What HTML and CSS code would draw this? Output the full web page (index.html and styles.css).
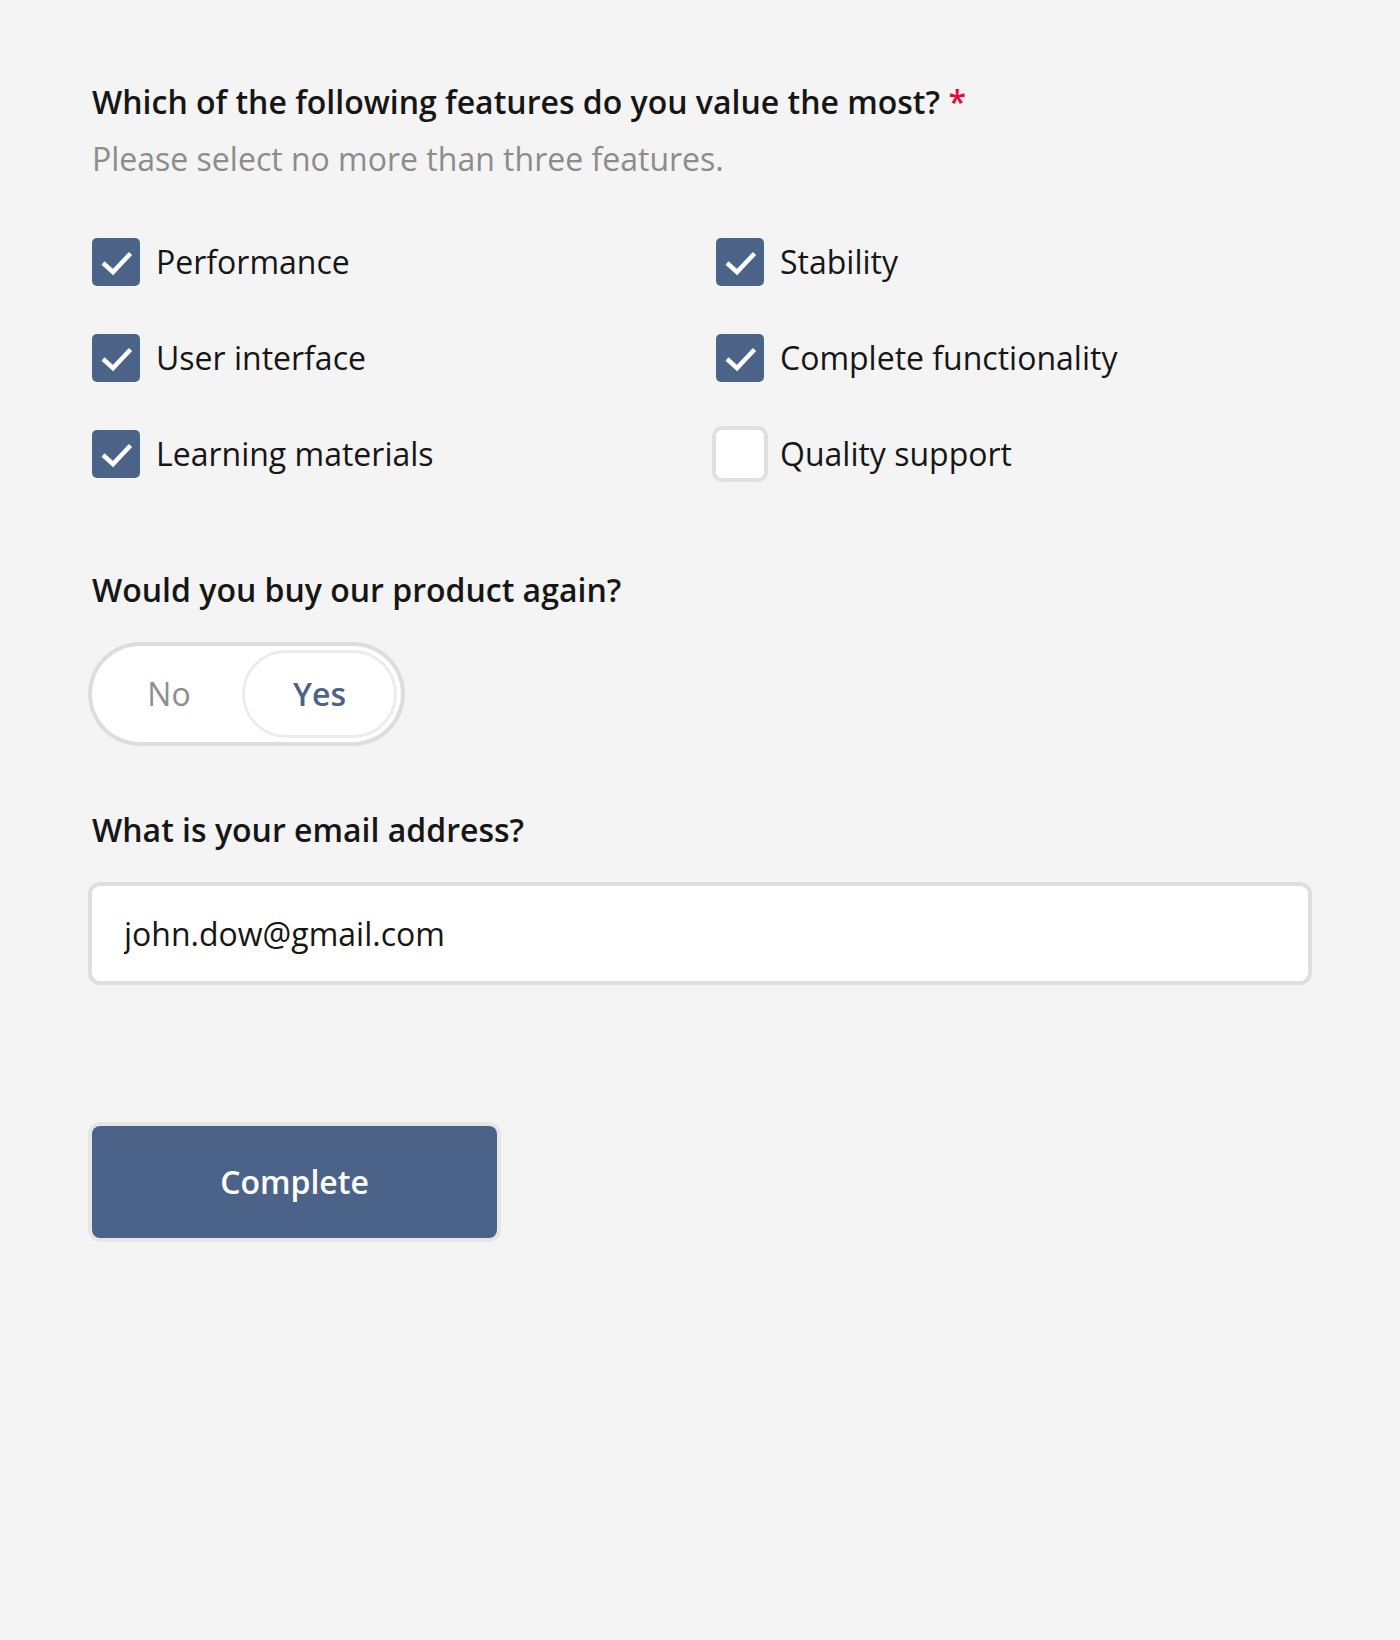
FILE: index.html
```html
<!DOCTYPE html>
<html lang="en">
<head>
<meta charset="utf-8">
<title>Survey</title>
<link rel="stylesheet" href="styles.css">
</head>
<body>
<form class="survey">
  <div class="question q-features">
    <h2 class="q-title">Which of the following features do you value the most? <span class="req">*</span></h2>
    <p class="q-desc">Please select no more than three features.</p>
    <div class="choices">
      <label class="choice checked"><span class="box"><svg viewBox="0 0 48 48"><polyline points="11,25 21,34 38.5,15.5"/></svg></span><span class="choice-text">Performance</span></label>
      <label class="choice checked"><span class="box"><svg viewBox="0 0 48 48"><polyline points="11,25 21,34 38.5,15.5"/></svg></span><span class="choice-text">Stability</span></label>
      <label class="choice checked"><span class="box"><svg viewBox="0 0 48 48"><polyline points="11,25 21,34 38.5,15.5"/></svg></span><span class="choice-text">User interface</span></label>
      <label class="choice checked"><span class="box"><svg viewBox="0 0 48 48"><polyline points="11,25 21,34 38.5,15.5"/></svg></span><span class="choice-text">Complete functionality</span></label>
      <label class="choice checked"><span class="box"><svg viewBox="0 0 48 48"><polyline points="11,25 21,34 38.5,15.5"/></svg></span><span class="choice-text">Learning materials</span></label>
      <label class="choice"><span class="box"></span><span class="choice-text">Quality support</span></label>
    </div>
  </div>

  <div class="question q-buy">
    <h2 class="q-title">Would you buy our product again?</h2>
    <div class="boolean">
      <span class="bool-opt">No</span>
      <span class="bool-thumb">Yes</span>
    </div>
  </div>

  <div class="question q-email">
    <h2 class="q-title">What is your email address?</h2>
    <input class="text-input" type="text" value="john.dow@gmail.com">
  </div>

  <div class="actions">
    <button type="button" class="complete-btn">Complete</button>
  </div>
</form>
</body>
</html>
```

FILE: styles.css
```css
html, body {
  margin: 0;
  padding: 0;
  background: #f4f4f4;
}

body {
  font-family: "Open Sans", "Noto Sans", "Liberation Sans", sans-serif;
  color: #161616;
  min-height: 1640px;
}

.survey {
  padding: 78px 0 0 92px;
  width: 1216px;
}

.question {
  display: flex;
  flex-direction: column;
  align-items: flex-start;
}

.q-title {
  margin: 0;
  font-size: 32px;
  line-height: 48px;
  font-weight: 600;
  color: #161616;
}

.req {
  color: #e50a3e;
}

.q-desc {
  margin: 9px 0 0;
  font-size: 32px;
  line-height: 48px;
  color: #8c8c8c;
}

.choices {
  margin-top: 55px;
  display: grid;
  grid-template-columns: 624px 592px;
  row-gap: 48px;
  width: 1216px;
}

.choice {
  display: flex;
  align-items: center;
  height: 48px;
  font-size: 32px;
  line-height: 48px;
}

.box {
  width: 48px;
  height: 48px;
  flex: 0 0 48px;
  box-sizing: border-box;
  background: #fff;
  box-shadow: 0 0 0 4px #e0e0e0;
  border-radius: 6px;
  display: flex;
}

.choice.checked .box {
  background: #4b6389;
  box-shadow: none;
  border-radius: 5px;
}

.box svg {
  width: 48px;
  height: 48px;
  fill: none;
  stroke: #fff;
  stroke-width: 4.5;
  stroke-linecap: butt;
  stroke-linejoin: miter;
}

.choice-text {
  margin-left: 16px;
}

.q-buy {
  margin-top: 88px;
}

.boolean {
  margin-top: 32px;
  width: 309px;
  height: 96px;
  box-sizing: border-box;
  padding: 4px;
  border-radius: 48px;
  background: #fff;
  box-shadow: 0 0 0 4px #dddddd;
  display: flex;
  align-items: stretch;
  font-size: 32px;
  line-height: 48px;
}

.bool-opt {
  flex: 1;
  display: flex;
  align-items: center;
  justify-content: center;
  color: #8e8e8e;
}

.bool-thumb {
  width: 155px;
  box-sizing: border-box;
  border: 3px solid #ececec;
  border-radius: 44px;
  display: flex;
  align-items: center;
  justify-content: center;
  color: #4b6389;
  font-weight: 600;
}

.q-email {
  margin-top: 64px;
}

.text-input {
  margin-top: 32px;
  width: 1216px;
  height: 95px;
  box-sizing: border-box;
  padding: 0 32px;
  border: none;
  outline: none;
  border-radius: 8px;
  background: #fff;
  box-shadow: 0 0 0 4px #dedede;
  font-family: "Open Sans", "Noto Sans", "Liberation Sans", sans-serif;
  font-size: 32px;
  line-height: 48px;
  color: #161616;
}

.actions {
  margin-top: 145px;
  display: flex;
}

.complete-btn {
  width: 405px;
  height: 112px;
  border: none;
  border-radius: 8px;
  background: #4b6389;
  box-shadow: 0 0 0 4px #e6e6e6;
  color: #fff;
  font-family: "Open Sans", "Noto Sans", "Liberation Sans", sans-serif;
  font-size: 32px;
  line-height: 48px;
  font-weight: 600;
  padding: 0;
  cursor: pointer;
}
```
